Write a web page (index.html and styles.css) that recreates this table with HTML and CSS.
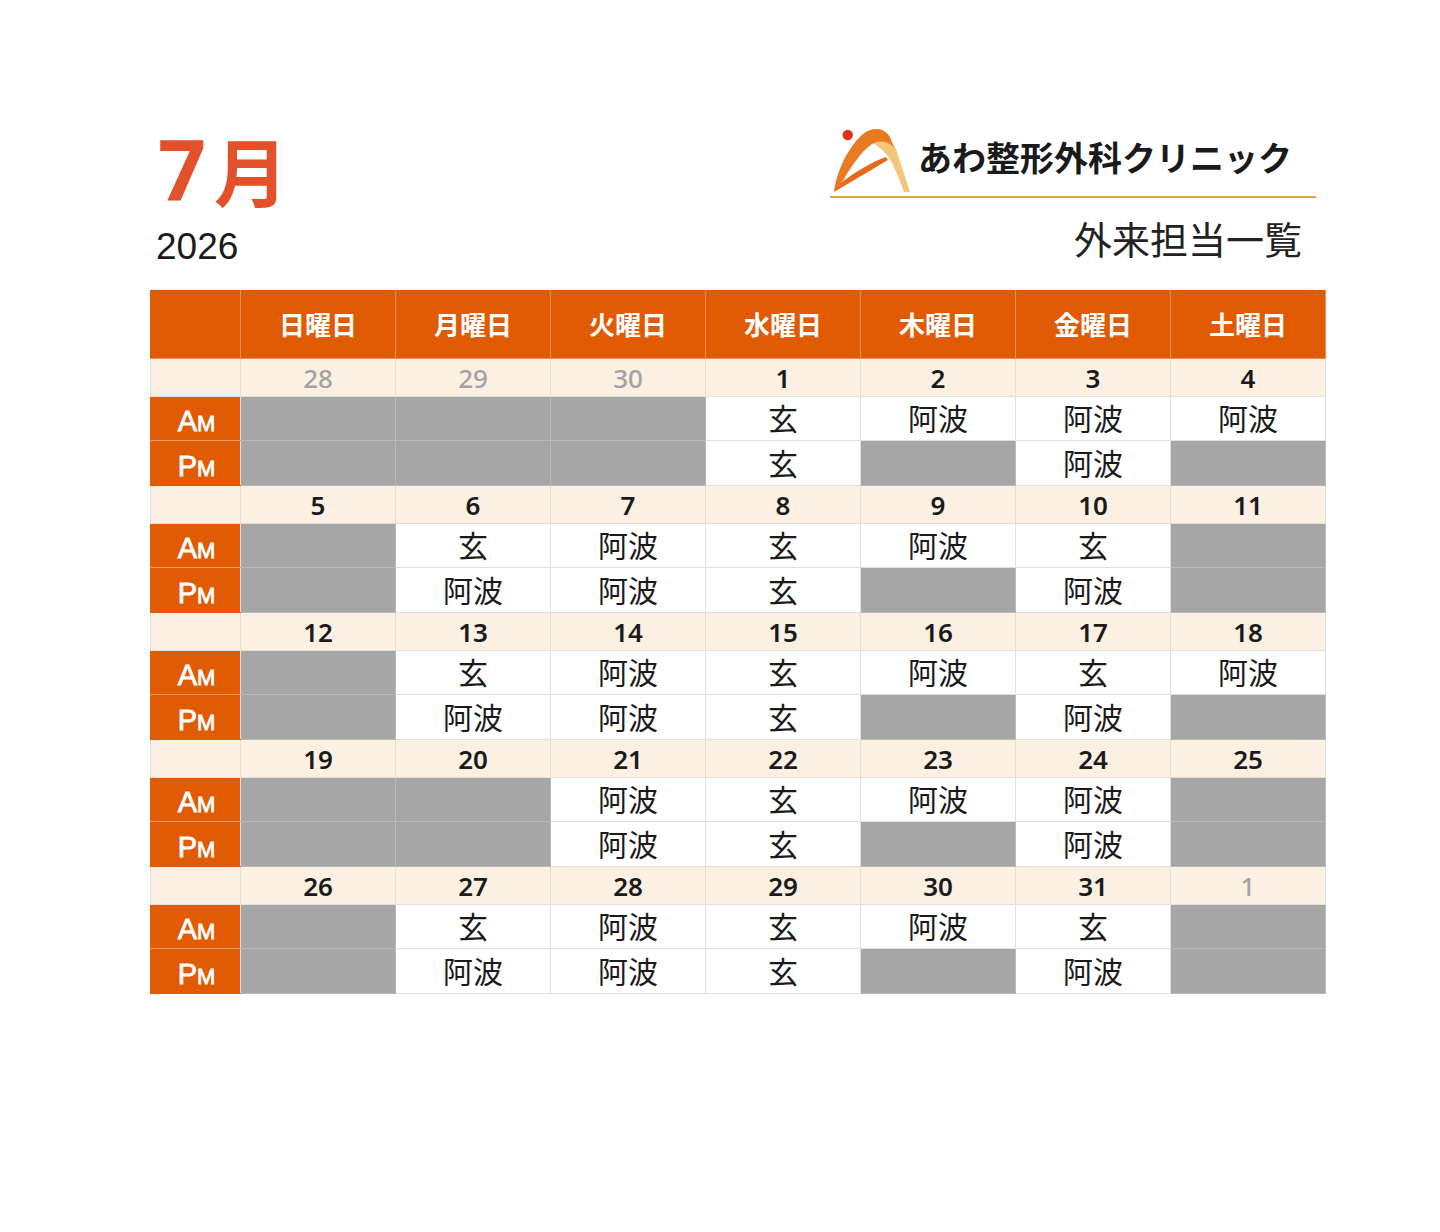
FILE: index.html
```html
<!DOCTYPE html>
<html lang="ja">
<head>
<meta charset="utf-8">
<title>7月 外来担当一覧</title>
<link rel="stylesheet" href="styles.css">
</head>
<body>
<div class="page">
  <header class="top">
    <div class="left">
      <div class="month"><span class="num">7</span><span class="kanji">月</span></div>
      <div class="year">2026</div>
    </div>
    <div class="right">
      <div class="brand">
        <svg class="mark" width="80" height="71" viewBox="0 0 80 71">
          <path d="M42,18 C52,12 62,14 66,24 L80,67 L74,67 C68,50 62,36 56,29 C52,24 47,20 42,18 Z" fill="#f4c67c"/>
          <path d="M4,67 C6,50 16,24 33,9 C42,2 54,2 60,12 L64,22 C57,16 49,15 42,19 C30,27 20,44 9,62 Z" fill="#ea7a22"/>
          <path d="M4,67 L58,35 L56,32 C42,37 28,45 12,57 Z" fill="#e8691c"/>
          <circle cx="17.7" cy="10" r="5.2" fill="#e3321b"/>
        </svg>
        <div class="brand-name">あわ整形外科クリニック</div>
      </div>
      <div class="subtitle">外来担当一覧</div>
    </div>
  </header>

  <table class="cal">
    <colgroup>
      <col class="c-label"><col class="c-day"><col class="c-day"><col class="c-day"><col class="c-day"><col class="c-day"><col class="c-day"><col class="c-day">
    </colgroup>
    <thead>
      <tr class="head">
        <th></th><th>日曜日</th><th>月曜日</th><th>火曜日</th><th>水曜日</th><th>木曜日</th><th>金曜日</th><th>土曜日</th>
      </tr>
    </thead>
    <tbody>
      <tr class="date">
        <td class="lab"></td><td class="m">28</td><td class="m">29</td><td class="m">30</td><td>1</td><td>2</td><td>3</td><td>4</td>
      </tr>
      <tr class="am">
        <td class="ap">A<small>M</small></td><td class="g"></td><td class="g"></td><td class="g"></td><td>玄</td><td>阿波</td><td>阿波</td><td>阿波</td>
      </tr>
      <tr class="pm">
        <td class="ap">P<small>M</small></td><td class="g"></td><td class="g"></td><td class="g"></td><td>玄</td><td class="g"></td><td>阿波</td><td class="g"></td>
      </tr>

      <tr class="date">
        <td class="lab"></td><td>5</td><td>6</td><td>7</td><td>8</td><td>9</td><td>10</td><td>11</td>
      </tr>
      <tr class="am">
        <td class="ap">A<small>M</small></td><td class="g"></td><td>玄</td><td>阿波</td><td>玄</td><td>阿波</td><td>玄</td><td class="g"></td>
      </tr>
      <tr class="pm">
        <td class="ap">P<small>M</small></td><td class="g"></td><td>阿波</td><td>阿波</td><td>玄</td><td class="g"></td><td>阿波</td><td class="g"></td>
      </tr>

      <tr class="date">
        <td class="lab"></td><td>12</td><td>13</td><td>14</td><td>15</td><td>16</td><td>17</td><td>18</td>
      </tr>
      <tr class="am">
        <td class="ap">A<small>M</small></td><td class="g"></td><td>玄</td><td>阿波</td><td>玄</td><td>阿波</td><td>玄</td><td>阿波</td>
      </tr>
      <tr class="pm">
        <td class="ap">P<small>M</small></td><td class="g"></td><td>阿波</td><td>阿波</td><td>玄</td><td class="g"></td><td>阿波</td><td class="g"></td>
      </tr>

      <tr class="date">
        <td class="lab"></td><td>19</td><td>20</td><td>21</td><td>22</td><td>23</td><td>24</td><td>25</td>
      </tr>
      <tr class="am">
        <td class="ap">A<small>M</small></td><td class="g"></td><td class="g"></td><td>阿波</td><td>玄</td><td>阿波</td><td>阿波</td><td class="g"></td>
      </tr>
      <tr class="pm">
        <td class="ap">P<small>M</small></td><td class="g"></td><td class="g"></td><td>阿波</td><td>玄</td><td class="g"></td><td>阿波</td><td class="g"></td>
      </tr>

      <tr class="date">
        <td class="lab"></td><td>26</td><td>27</td><td>28</td><td>29</td><td>30</td><td>31</td><td class="m">1</td>
      </tr>
      <tr class="am">
        <td class="ap">A<small>M</small></td><td class="g"></td><td>玄</td><td>阿波</td><td>玄</td><td>阿波</td><td>玄</td><td class="g"></td>
      </tr>
      <tr class="pm">
        <td class="ap">P<small>M</small></td><td class="g"></td><td>阿波</td><td>阿波</td><td>玄</td><td class="g"></td><td>阿波</td><td class="g"></td>
      </tr>
    </tbody>
  </table>
</div>
</body>
</html>
```

FILE: styles.css
```css
* { box-sizing: border-box; }

html, body {
  margin: 0;
  padding: 0;
  background: #ffffff;
}

body {
  font-family: "Noto Sans CJK JP", "Noto Sans", sans-serif;
  color: #1a1a1a;
}

.page {
  width: 1175px;
  margin-left: 150px;
  padding-top: 120px;
}

/* ---------- top area ---------- */
.top {
  display: flex;
  justify-content: space-between;
  height: 170px;
}

.left {
  padding-left: 8px;
  padding-top: 7px;
}

.month {
  color: #e2512a;
  font-weight: 700;
  line-height: 1;
  white-space: nowrap;
}

.month .num {
  font-family: "Noto Sans", "Liberation Sans", sans-serif;
  font-size: 84px;
  margin-right: 8px;
}

.month .kanji {
  font-family: "Noto Sans CJK JP", sans-serif;
  font-size: 74px;
}

.year {
  font-family: "Liberation Sans", "Noto Sans", sans-serif;
  font-size: 37px;
  line-height: 1;
  margin-top: 17px;
  margin-left: -2px;
  color: #1a1a1a;
}

.right {
  width: 486px;
  margin-right: 9px;
  padding-top: 5px;
}

.brand {
  display: flex;
  align-items: flex-start;
  height: 73px;
  border-bottom: 2px solid #e9a23b;
}

.mark {
  display: block;
  flex: none;
}

.brand-name {
  margin-left: 8px;
  margin-top: 15px;
  font-size: 34px;
  font-weight: 700;
  line-height: 1;
  color: #1a1a1a;
  white-space: nowrap;
}

.subtitle {
  margin-top: 21px;
  padding-right: 14px;
  text-align: right;
  font-size: 38px;
  line-height: 1;
  font-weight: 400;
  color: #222;
}

/* ---------- calendar table ---------- */
.cal {
  width: 1175px;
  border-collapse: collapse;
  table-layout: fixed;
}

.c-label { width: 90px; }
.c-day { width: 155px; }

.cal th,
.cal td {
  padding: 0;
  text-align: center;
  vertical-align: middle;
  border: 1px solid #e4dfd8;
}

.head th {
  height: 68px;
  padding-bottom: 3px;
  background: #e05b04;
  color: #ffffff;
  font-size: 26px;
  font-weight: 700;
  border-color: #ea8b50;
  border-top-color: #e05b04;
}

.head th:first-child {
  border-left-color: #e05b04;
}

.date td {
  height: 38px;
  background: #fbf0e1;
  font-family: "Noto Sans", "Liberation Sans", sans-serif;
  font-size: 26px;
  font-weight: 600;
  color: #1a1a1a;
  line-height: 1;
}

.date td.m {
  color: #a3a3a3;
  font-weight: 500;
}

.am td { height: 44px; }
.pm td { height: 45px; }

.am td,
.pm td {
  font-size: 30px;
  font-weight: 400;
  line-height: 1;
  color: #1a1a1a;
  background: #ffffff;
  padding-bottom: 3px;
}

.cal td.g {
  background: #a6a6a6;
  border-color: #b9b9b9;
}

.cal td.ap {
  background: #e05b04;
  color: #ffffff;
  font-family: "Liberation Sans", "Noto Sans", sans-serif;
  font-size: 29px;
  font-weight: 400;
  border-color: #e05b04;
  border-right-color: #e4dfd8;
  vertical-align: bottom;
  padding-bottom: 4px;
  padding-left: 2px;
  line-height: 1;
  -webkit-text-stroke: 0.8px #ffffff;
}

.am td.ap {
  border-bottom-color: #ee9a66;
}

.cal td.ap small {
  font-size: 22px;
}
```
